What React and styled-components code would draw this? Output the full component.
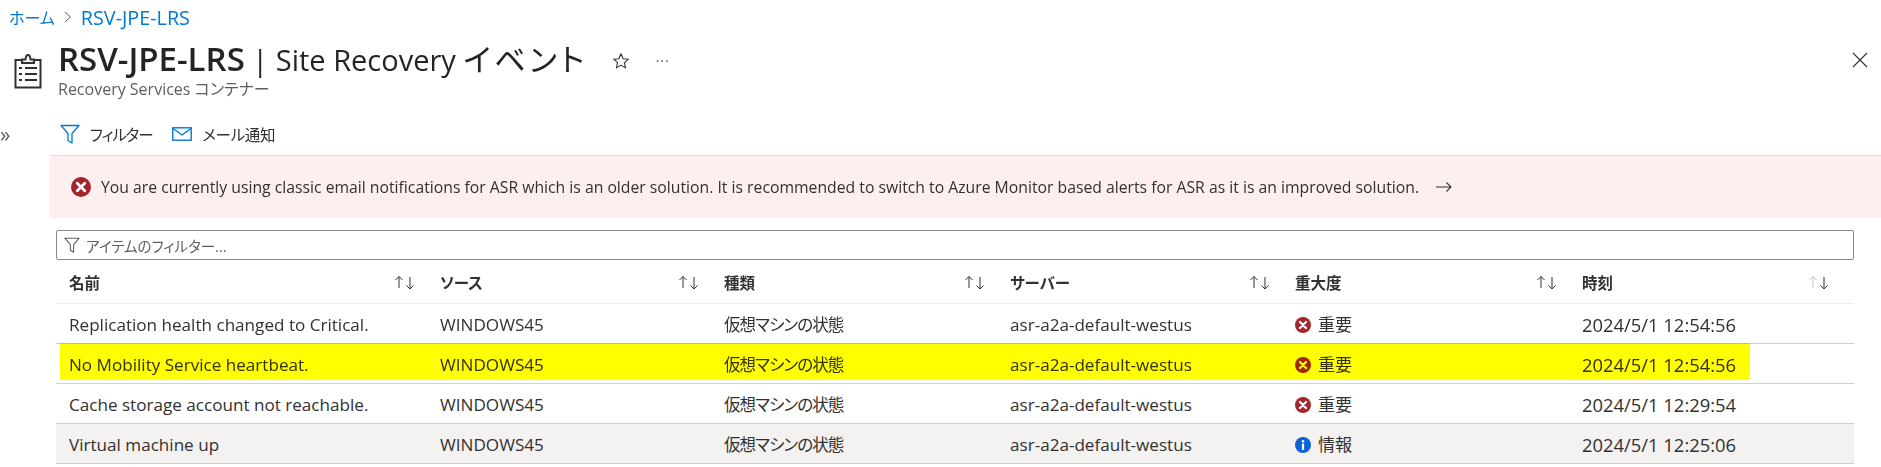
import React from "react";
import styled, { createGlobalStyle } from "styled-components";

const GlobalStyle = createGlobalStyle`
  html, body {
    margin: 0;
    padding: 0;
    background: #fff;
    overflow: hidden;
  }
  body {
    font-family: "Open Sans", "Noto Sans CJK JP", sans-serif;
    font-feature-settings: "palt";
    color: #323130;
  }
`;

const COLUMNS = "371px 284px 286px 285px 287px 272px";

const columns = ["名前", "ソース", "種類", "サーバー", "重大度", "時刻"];

const events = [
  { name: "Replication health changed to Critical.", level: "error", time: "2024/5/1 12:54:56" },
  { name: "No Mobility Service heartbeat.", level: "error", time: "2024/5/1 12:54:56", marked: true },
  { name: "Cache storage account not reachable.", level: "error", time: "2024/5/1 12:29:54" },
  { name: "Virtual machine up", level: "info", time: "2024/5/1 12:25:06", selected: true },
];

function FilterIcon({ size = 20, color = "#0078d4" }) {
  return (
    <svg width={size} height={size} viewBox="0 0 20 20" fill="none" stroke={color} strokeWidth="1.3">
      <path d="M1 1.5h18l-7 8v9.5l-4-2.5v-7z" strokeLinejoin="round" />
    </svg>
  );
}

function ErrorIcon({ size = 16 }) {
  return (
    <svg width={size} height={size} viewBox="0 0 16 16">
      <circle cx="8" cy="8" r="8" fill="#a4262c" />
      <path d="M5 5l6 6M11 5l-6 6" stroke="#fff" strokeWidth="2.2" strokeLinecap="round" />
    </svg>
  );
}

function InfoIcon({ size = 16 }) {
  return (
    <svg width={size} height={size} viewBox="0 0 16 16">
      <circle cx="8" cy="8" r="8" fill="#0f62d6" />
      <circle cx="8" cy="4.2" r="1.3" fill="#fff" />
      <rect x="6.9" y="6.6" width="2.2" height="6.4" fill="#fff" />
    </svg>
  );
}

function SortIcon({ faded }) {
  return (
    <svg width="22" height="15" viewBox="0 0 22 15" fill="none" strokeWidth="1">
      <path d="M5 13V1.5M1.5 5L5 1.5 8.5 5" stroke={faded ? "#c8c6c4" : "#323130"} />
      <path d="M16 2v12M12.5 10.5L16 14l3.5-3.5" stroke="#323130" />
    </svg>
  );
}

function App() {
  return (
    <Page>
      <GlobalStyle />
      <Breadcrumb>
        <CrumbLink $size={16}>ホーム</CrumbLink>
        <svg width="8" height="12" viewBox="0 0 8 12" fill="none" stroke="#605e5c">
          <path d="M1 1l5.5 5L1 11" />
        </svg>
        <CrumbLink $size={19.8}>RSV-JPE-LRS</CrumbLink>
      </Breadcrumb>

      <Header>
        <PageIcon>
          <svg width="28" height="36" viewBox="0 0 28 36" fill="none" stroke="#323130" strokeWidth="2">
            <path d="M8 7H1.5v27.5h25V7H20" />
            <path d="M8 10V6.5h3.5C11.8 3.5 12.5 2 14 2s2.2 1.5 2.5 4.5H20V10z" />
            <path d="M5 15h3M11 15h12M5 21h3M11 21h12M5 27h3M11 27h12" />
          </svg>
        </PageIcon>
        <TitleBlock>
          <TitleRow>
            <Title>
              <strong>RSV-JPE-LRS</strong> | Site Recovery <Kana>イベント</Kana>
            </Title>
            <StarButton>
              <svg width="18" height="18" viewBox="0 0 18 18" fill="none" stroke="#323130" strokeWidth="1.1">
                <path d="M9 1.8l2.1 4.9 5.3.5-4 3.5 1.2 5.2L9 13.1l-4.6 2.8 1.2-5.2-4-3.5 5.3-.5z" strokeLinejoin="round" />
              </svg>
            </StarButton>
            <More>···</More>
          </TitleRow>
          <Subtitle>Recovery Services コンテナー</Subtitle>
        </TitleBlock>
        <CloseButton>
          <svg width="16" height="16" viewBox="0 0 16 16" stroke="#323130" strokeWidth="1.1">
            <path d="M1 1l14 14M15 1L1 15" />
          </svg>
        </CloseButton>
      </Header>

      <Toolbar>
        <Expand>»</Expand>
        <ToolButton $size={15.5} $spacing={-1.1}>
          <FilterIcon />
          フィルター
        </ToolButton>
        <ToolButton $size={15.5} $spacing={-0.3}>
          <svg width="20" height="14" viewBox="0 0 20 14" fill="none" stroke="#0078d4" strokeWidth="1.4">
            <rect x="0.8" y="0.8" width="18.4" height="12.4" />
            <path d="M1 1.5l9 6.5 9-6.5" />
          </svg>
          メール通知
        </ToolButton>
      </Toolbar>

      <Banner>
        <ErrorIcon size={20} />
        <BannerText>
          You are currently using classic email notifications for ASR which is an older solution. It is recommended to switch to Azure Monitor based alerts for ASR as it is an improved solution.
        </BannerText>
        <svg width="18" height="12" viewBox="0 0 18 12" fill="none" stroke="#323130" strokeWidth="1.1">
          <path d="M1 6h15M11.5 1.5L16 6l-4.5 4.5" />
        </svg>
      </Banner>

      <Content>
        <FilterBox>
          <FilterIcon size={16} color="#605e5c" />
          <FilterPlaceholder>アイテムのフィルター...</FilterPlaceholder>
        </FilterBox>

        <HeaderRow>
          {columns.map((label, i) => (
            <HeaderCell key={label}>
              <span>{label}</span>
              <SortIcon faded={i === columns.length - 1} />
            </HeaderCell>
          ))}
        </HeaderRow>

        {events.map((ev) => (
          <Row key={ev.name} $selected={ev.selected}>
            {ev.marked && <Marker />}
            <Cell>{ev.name}</Cell>
            <Cell>WINDOWS45</Cell>
            <KindCell>仮想マシンの状態</KindCell>
            <Cell>asr-a2a-default-westus</Cell>
            <Cell>
              <Severity>
                {ev.level === "error" ? <ErrorIcon /> : <InfoIcon />}
                {ev.level === "error" ? "重要" : "情報"}
              </Severity>
            </Cell>
            <TimeCell>{ev.time}</TimeCell>
          </Row>
        ))}
      </Content>
    </Page>
  );
}

const Page = styled.div`
  width: 1881px;
  height: 467px;
  overflow: hidden;
  font-size: 14px;
`;

const Breadcrumb = styled.nav`
  display: flex;
  align-items: center;
  gap: 9px;
  height: 36px;
  padding: 0 0 2px 9px;
  box-sizing: border-box;
`;

const CrumbLink = styled.a`
  color: #0078d4;
  font-size: ${(p) => p.$size}px;
`;

const Header = styled.header`
  display: flex;
  height: 66px;
`;

const PageIcon = styled.div`
  width: 58px;
  padding: 17px 0 0 14px;
  box-sizing: border-box;
`;

const TitleBlock = styled.div`
  flex: 1;
`;

const TitleRow = styled.div`
  display: flex;
  align-items: center;
  height: 48px;
`;

const Title = styled.h1`
  margin: -4px 0 0;
  font-size: 29px;
  font-weight: 400;
  color: #252423;
  white-space: nowrap;

  strong {
    font-size: 33px;
    font-weight: 600;
  }
`;

const Kana = styled.span`
  font-size: 31px;
  letter-spacing: 3.5px;
`;

const StarButton = styled.span`
  display: flex;
  margin: 2px 0 0 24px;
`;

const More = styled.span`
  margin-left: 26px;
  font-size: 14px;
  letter-spacing: 1px;
  color: #605e5c;
`;

const Subtitle = styled.div`
  font-size: 16px;
  color: #605e5c;
  line-height: 16px;
  margin-top: -3px;
`;

const CloseButton = styled.span`
  display: flex;
  margin: 16px 13px 0 0;
  height: 16px;
`;

const Toolbar = styled.div`
  display: flex;
  align-items: center;
  height: 53px;
  padding-top: 11px;
  box-sizing: border-box;
`;

const Expand = styled.span`
  width: 60px;
  font-size: 21px;
  color: #605e5c;
  line-height: 1;
`;

const ToolButton = styled.span`
  display: flex;
  align-items: center;
  gap: 10px;
  font-size: ${(p) => p.$size}px;
  letter-spacing: ${(p) => p.$spacing}px;
  margin-right: 20px;
  color: #323130;
`;

const Banner = styled.div`
  display: flex;
  align-items: center;
  gap: 10px;
  height: 62px;
  margin-left: 50px;
  padding-left: 21px;
  background: #fdefef;
  border-top: 1px solid #e1dfdd;
`;

const BannerText = styled.span`
  font-size: 15.75px;
  white-space: nowrap;
  margin-right: 6px;
`;

const Content = styled.div`
  margin: 12px 27px 0 56px;
`;

const FilterBox = styled.div`
  display: flex;
  align-items: center;
  gap: 6px;
  height: 28px;
  padding-left: 7px;
  border: 1px solid #8a8886;
  border-radius: 2px;
`;

const FilterPlaceholder = styled.span`
  font-size: 14.5px;
  color: #605e5c;
`;

const HeaderRow = styled.div`
  display: grid;
  grid-template-columns: ${COLUMNS};
  height: 43px;
  padding-left: 13px;
  border-bottom: 1px solid #edebe9;
`;

const HeaderCell = styled.div`
  display: flex;
  align-items: center;
  justify-content: space-between;
  padding: 2px 24px 0 0;
  font-size: 15.5px;
  font-weight: 700;
  color: #323130;
`;

const Row = styled.div`
  position: relative;
  display: grid;
  grid-template-columns: ${COLUMNS};
  align-items: center;
  height: 39px;
  padding-left: 13px;
  border-bottom: 1px solid #d2d0ce;
  background: ${(p) => (p.$selected ? "#f3f2f1" : "#fff")};
`;

const Marker = styled.div`
  position: absolute;
  left: 4px;
  top: -1px;
  width: 1690px;
  height: 37px;
  background: #ffff00;
  mix-blend-mode: multiply;
`;

const Cell = styled.div`
  font-size: 17.1px;
  line-height: 22px;
  padding-top: 2px;
  white-space: nowrap;
  color: #323130;
`;

const KindCell = styled(Cell)`
  font-size: 16.5px;
  letter-spacing: -0.9px;
`;

const TimeCell = styled(Cell)`
  font-size: 18.4px;
`;

const Severity = styled.span`
  display: flex;
  align-items: center;
  gap: 7px;
`;

export default App;
